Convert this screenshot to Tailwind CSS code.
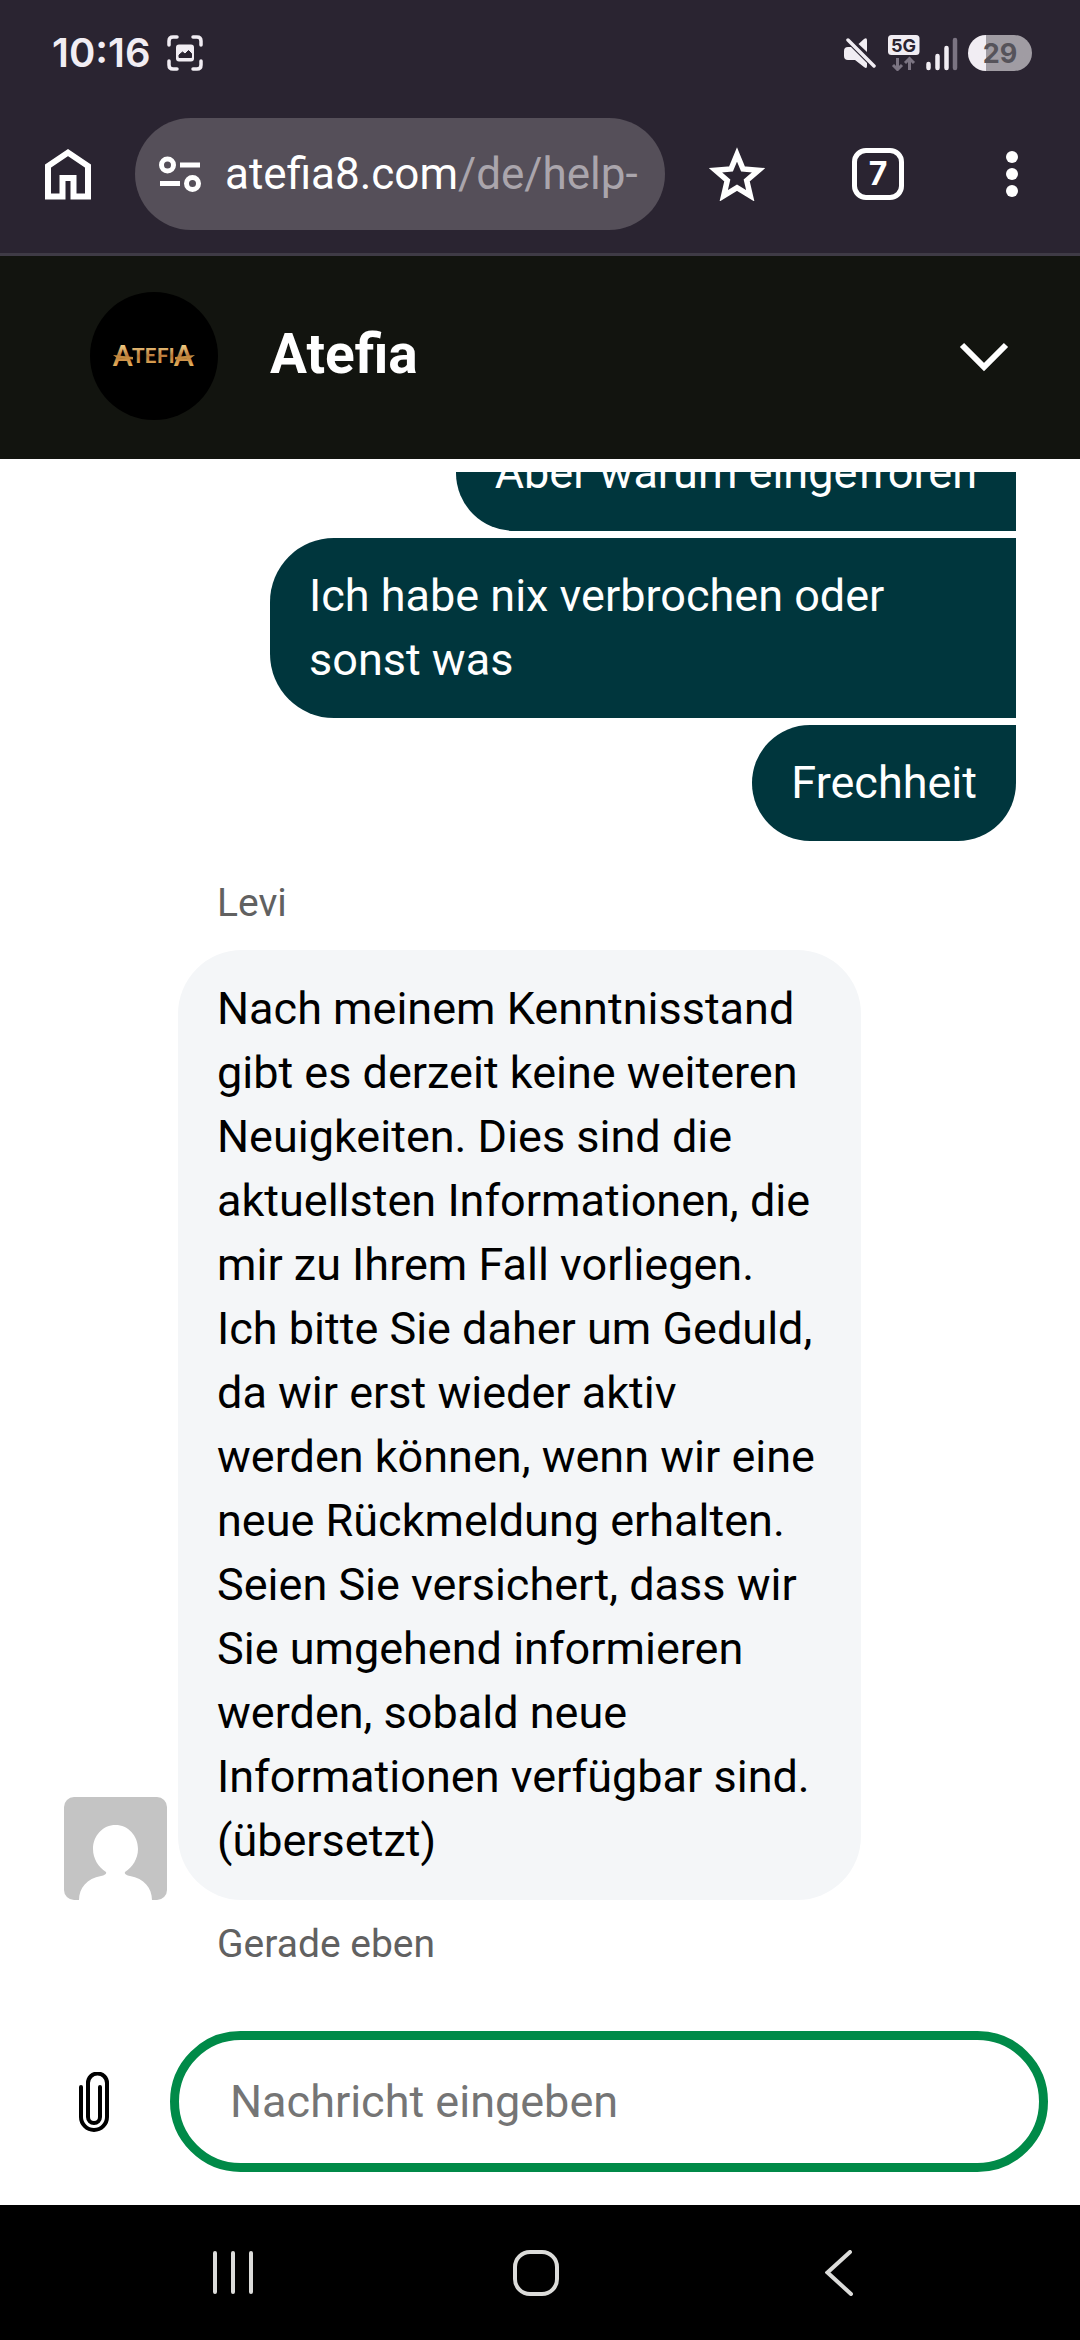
<!DOCTYPE html>
<html lang="de">
<head>
<meta charset="utf-8">
<meta name="viewport" content="width=device-width, initial-scale=1">
<title>Atefia Chat</title>
<script src="https://cdn.jsdelivr.net/npm/@tailwindcss/browser@4"></script>
</head>
<body class="bg-white font-['Roboto',sans-serif]">
<div class="flex h-screen flex-col overflow-hidden">

  <!-- Browser chrome -->
  <div class="shrink-0 border-b-3 border-[#3f3b46] bg-[#2a2431] text-white">
    <div class="flex h-[106px] items-center pl-[52px] pr-12 text-[#f1edf3]">
      <span class="font-['Inter',sans-serif] text-[40px] font-semibold leading-none">10:16</span>
      <svg class="ml-4 size-9" viewBox="0 0 36 36" fill="none" aria-hidden="true">
        <path d="M2 10V6Q2 2 6 2H10M26 2H30Q34 2 34 6V10M34 26V30Q34 34 30 34H26M10 34H6Q2 34 2 30V26" stroke="currentColor" stroke-width="3.500" stroke-linecap="round"/>
        <rect x="9" y="9.500" width="18" height="17" rx="3" fill="currentColor"/>
        <path d="M12 22.500V20L15.500 17L18 19L21.500 15.500L24.500 18.500V22.500Z" fill="#2a2431" stroke="#2a2431" stroke-linejoin="round"/>
      </svg>
      <div class="ml-auto flex items-center">
        <svg class="h-9 w-8" viewBox="0 0 32 36" fill="none" aria-hidden="true">
          <path d="M0 16Q0 12 4 12H7L23 28V31Q23 34.500 20 32L11 25H4Q0 25 0 21Z" fill="currentColor"/>
          <path d="M14.500 9L20 4Q23 2 23 5.500V17Z" fill="currentColor"/>
          <path d="M4 5L30 31" stroke="currentColor" stroke-width="3.500" stroke-linecap="round"/>
        </svg>
        <svg class="ml-3 h-9 w-8" viewBox="0 0 32 36" fill="none" aria-hidden="true">
          <rect x="0" y="0" width="31.500" height="20" rx="3.500" fill="currentColor"/>
          <text x="15.500" y="16.500" text-anchor="middle" font-family="Inter, sans-serif" font-size="18" font-weight="700" fill="#2a2431">5G</text>
          <path d="M9.500 23V34M5 30L9.500 34.500L14 30M21.500 35V24M17 28L21.500 23.500L26 28" stroke="#7b7482" stroke-width="3"/>
        </svg>
        <svg class="ml-[6px] h-9 w-8" viewBox="0 0 32 36" stroke-width="4.500" stroke-linecap="round" aria-hidden="true">
          <path d="M2.500 29V33M11.500 21V33M20.500 13V33" stroke="currentColor"/>
          <path d="M29 5V33" stroke="#7b7482"/>
        </svg>
        <div class="ml-[10px] flex h-9 w-16 items-center justify-center rounded-full bg-linear-to-r from-[#f1edf3] from-28% to-[#a09ca3] to-28% font-['Inter',sans-serif] text-[27px] font-bold leading-none text-[#56535a]">29</div>
      </div>
    </div>

    <div class="flex h-[147px] items-start pt-3">
      <button type="button" aria-label="Startseite" class="ml-8 flex h-28 w-18 items-center justify-center">
        <svg class="h-[52px] w-[46px]" viewBox="0 0 46 52" fill="none" stroke="currentColor" stroke-width="6" aria-hidden="true"><path d="M3 48.500V18L23 4.500L43 18V48.500H28.500V30H17.500V48.500Z"/></svg>
      </button>
      <div class="ml-[31px] flex h-28 min-w-0 flex-1 items-center rounded-full bg-[#554f59] pl-6 pr-4">
        <svg class="h-10 w-[42px] shrink-0" viewBox="0 0 42 40" fill="none" stroke="currentColor" stroke-width="5" aria-hidden="true"><circle cx="8.500" cy="11" r="6"/><path d="M21 11H41M1 29.500H21"/><circle cx="33.500" cy="29.500" r="6"/></svg>
        <a href="#" class="ml-6 whitespace-nowrap text-[44px] leading-[60px] text-white">atefia8.com<span class="text-[#aaa5ac]">/de/help-</span></a>
      </div>
      <button type="button" aria-label="Lesezeichen" class="ml-9 flex h-28 w-18 items-center justify-center">
        <svg class="h-[54px] w-[56px]" viewBox="0 0 56 54" fill="none" stroke="currentColor" stroke-width="5.500" aria-hidden="true"><path d="M28 7.500L34 22L49.500 23.300L37.700 33.500L41.300 48.800L28 40.700L14.700 48.800L18.300 33.500L6.500 23.300L22 22Z"/></svg>
      </button>
      <button type="button" aria-label="Tabs" class="ml-[69px] flex h-28 w-18 items-center justify-center">
        <span class="flex size-[52px] items-center justify-center rounded-[14px] border-[5px] border-white font-['Inter',sans-serif] text-[32px] font-bold leading-none">7</span>
      </button>
      <button type="button" aria-label="Menü" class="ml-[62px] mr-8 flex h-28 w-18 items-center justify-center">
        <svg class="h-12 w-3" viewBox="0 0 12 48" fill="currentColor" aria-hidden="true"><circle cx="6" cy="7" r="6"/><circle cx="6" cy="24" r="6"/><circle cx="6" cy="41" r="6"/></svg>
      </button>
    </div>
  </div>

  <!-- Chat header -->
  <header class="flex h-[203px] shrink-0 items-center bg-[#12140f] pb-1 pl-[90px] pr-[70px] text-white">
    <div class="flex size-32 items-center justify-center rounded-full bg-black">
      <svg class="h-10 w-[90px]" viewBox="0 0 90 40" aria-label="Atefia" role="img">
        <defs><linearGradient id="gold" gradientUnits="userSpaceOnUse" x1="0" y1="8" x2="0" y2="32"><stop offset="0" stop-color="#f6d68c"/><stop offset=".5" stop-color="#b9793a"/><stop offset="1" stop-color="#f0bd62"/></linearGradient></defs>
        <g fill="url(#gold)" font-family="Lato, sans-serif" font-weight="700">
          <text x="4" y="30" font-size="28">A</text>
          <text x="23" y="27" font-size="21">TEFI</text>
          <text x="65" y="30" font-size="28">A</text>
        </g>
        <path d="M4 19L24 21V23.500L8 22ZM86 19L66 21V23.500L82 22Z" fill="#c58a3e"/>
      </svg>
    </div>
    <h1 class="ml-[52px] pb-[3px] text-[55px] font-bold leading-none">Atefia</h1>
    <button type="button" aria-label="Minimieren" class="ml-auto">
      <svg class="h-8 w-[52px]" viewBox="0 0 52 32" fill="none" stroke="currentColor" stroke-width="6" aria-hidden="true"><path d="M4 5L26 27L48 5"/></svg>
    </button>
  </header>

  <!-- Conversation -->
  <main class="mt-[13px] flex min-h-0 flex-1 flex-col justify-end overflow-hidden px-16 text-[45px] leading-[64px]">
    <div class="flex flex-col items-end gap-[7px] text-white">
      <p class="max-w-[746px] rounded-l-[64px] bg-[#00363d] px-[39px] py-[26px]">Aber warum eingefroren</p>
      <p class="max-w-[746px] rounded-l-[64px] bg-[#00363d] px-[39px] py-[26px]">Ich habe nix verbrochen oder sonst was</p>
      <p class="max-w-[746px] rounded-l-[64px] rounded-br-[64px] bg-[#00363d] px-[39px] py-[26px]">Frechheit</p>
    </div>
    <p class="mt-9 pl-[153px] text-[39px] leading-[52px] text-[#616161]">Levi</p>
    <div class="mt-[21px] flex items-end gap-[11px]">
      <svg class="size-[103px] shrink-0 rounded-[10px]" viewBox="0 0 103 103" aria-hidden="true">
        <rect width="103" height="103" fill="#c4c4c4"/>
        <path d="M51.500 28C64 28 74 38.500 74 52C74 62 68.500 70 61 75C60 77 63 78.500 66 79C80 81.500 88 91 88 103H15C15 91 23 81.500 37 79C40 78.500 43 77 42 75C34.500 70 29 62 29 52C29 38.500 39 28 51.500 28Z" fill="#fff"/>
      </svg>
      <p class="max-w-[683px] rounded-[64px] bg-[#f4f6f8] px-[39px] py-[27px] text-black">Nach meinem Kenntnisstand gibt es derzeit keine weiteren Neuigkeiten. Dies sind die aktuellsten Informationen, die mir zu Ihrem Fall vorliegen.<br>Ich bitte Sie daher um Geduld, da wir erst wieder aktiv werden können, wenn wir eine neue Rückmeldung erhalten.<br>Seien Sie versichert, dass wir Sie umgehend informieren werden, sobald neue Informationen verfügbar sind. (übersetzt)</p>
    </div>
    <p class="mt-[18px] pl-[153px] text-[39px] leading-[52px] text-[#616161]">Gerade eben</p>
  </main>

  <!-- Message composer -->
  <form class="mt-[61px] flex shrink-0 items-center pb-[33px] pl-[62px] pr-8">
    <button type="button" aria-label="Datei anhängen" class="flex h-16 w-16 items-center justify-center">
      <svg class="h-[60px] w-[30px]" viewBox="0 0 30 60" fill="none" stroke="currentColor" stroke-width="4" stroke-linecap="round" aria-hidden="true"><path d="M2 15V45A13 13 0 0 0 28 45V11A9.500 9.500 0 0 0 9 11V45A6 6 0 0 0 21 45V15"/></svg>
    </button>
    <input type="text" aria-label="Nachricht eingeben" placeholder="Nachricht eingeben" class="ml-11 h-[141px] min-w-0 flex-1 rounded-full border-9 border-[#008a48] px-[51px] text-[45px] outline-none placeholder:text-[#757575]">
  </form>

  <!-- System navigation -->
  <nav class="flex h-[135px] shrink-0 items-center justify-between bg-black pl-[201px] pr-[209px] text-[#dcdcda]">
    <button type="button" aria-label="Letzte Apps" class="flex size-16 items-center justify-center"><svg class="h-[46px] w-10" viewBox="0 0 40 46" stroke="currentColor" stroke-width="4" stroke-linecap="round" aria-hidden="true"><path d="M2 3V42M20 3V42M38 3V42"/></svg></button>
    <button type="button" aria-label="Home" class="flex size-16 items-center justify-center"><svg class="size-[46px]" viewBox="0 0 46 46" fill="none" stroke="currentColor" stroke-width="4" aria-hidden="true"><rect x="2" y="2" width="42" height="42" rx="15"/></svg></button>
    <button type="button" aria-label="Zurück" class="flex size-16 items-center justify-center"><svg class="h-[46px] w-7" viewBox="0 0 28 46" fill="none" stroke="currentColor" stroke-width="4" stroke-linecap="round" aria-hidden="true"><path d="M25 2L2.500 22.500L26 44"/></svg></button>
  </nav>
</div>
</body>
</html>
